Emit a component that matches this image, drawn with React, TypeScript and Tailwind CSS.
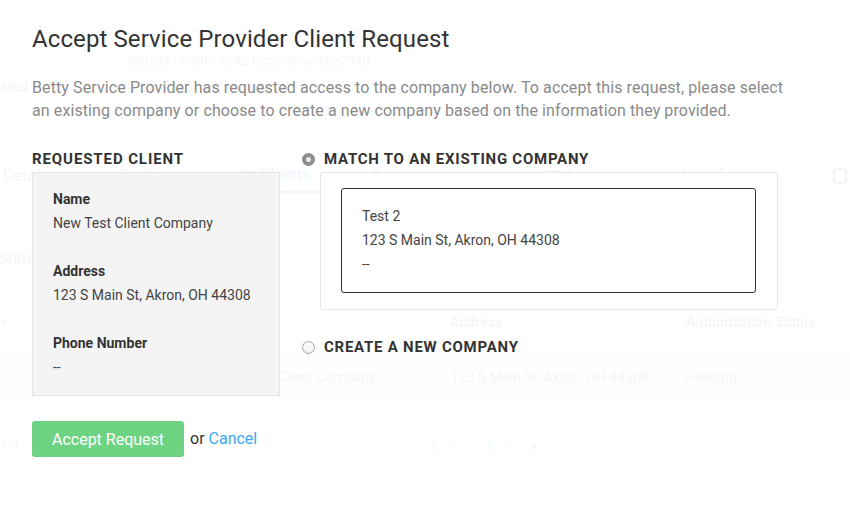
import React from "react";

function BackgroundPage() {
  return (
    <div className="h-full text-[14px] text-[#7a7a7a]">
      <div className="h-[52px]" />
      <div className="pl-[127px] h-[18px] leading-[18px] text-[13px]">88924a11-30f6-4542-bccd-d9cac6ba7940</div>
      <div className="flex h-[20px] mt-[7px] leading-[20px]">
        <div className="w-[28px] flex justify-end overflow-hidden">
          <span className="shrink-0 whitespace-nowrap font-bold">Date Created</span>
        </div>
        <span className="ml-[99px]">4/25/2019</span>
      </div>

      {/* tabs */}
      <div className="mt-[61px] flex h-[36px] items-center text-[16px]">
        <span className="w-[120px] pl-[3px]">Details</span>
        <span className="w-[120px]">Staff</span>
        <span className="w-[88px] h-full flex items-center gap-[6px] border-b-[3px] border-[#3fa9f5] text-[#3fa9f5] font-bold">
          <span className="w-[14px] h-[10px] rounded-sm bg-[#3fa9f5]" />
          Clients
        </span>
        <span className="w-[42px]" />
        <span className="w-[175px] flex items-center gap-[6px]">
          <span className="w-[12px] h-[12px] rotate-45 border-2 border-[#7a7a7a]" />
          Waste Streams
        </span>
        <span className="w-[288px] flex items-center gap-[6px]">
          <span className="w-[16px] h-[12px] border-2 border-[#7a7a7a]" />
          Non-Hazardous Manifests
        </span>
        <span className="w-[14px] h-[16px] rounded-[3px] border-2 border-[#7a7a7a]" />
      </div>

      <div className="mt-[55px] h-[20px] leading-[20px] text-[16px] -ml-[2px]">Status</div>

      {/* table header */}
      <div className="mt-[43px] flex h-[20px] items-center font-bold">
        <span className="w-[450px] text-[10px]">⇕</span>
        <span className="w-[236px]">Address</span>
        <span>Authorization Status</span>
      </div>

      {/* row */}
      <div className="mt-[22px] flex h-[46px] items-center bg-[#dde9f5]">
        <span className="w-[451px] pl-[216px]">New Test Client Company</span>
        <span className="w-[235px]">123 S Main St, Akron, OH 44308</span>
        <span>Pending</span>
      </div>

      {/* pagination */}
      <div className="mt-[36px] flex h-[20px] items-center">
        <span className="w-[430px] text-[13px]">1/1</span>
        <span className="w-[20px]">«</span>
        <span className="w-[35px]">‹</span>
        <span className="w-[20px] text-[#3fa9f5] font-bold">1</span>
        <span className="w-[25px]">›</span>
        <span>»</span>
      </div>
    </div>
  );
}

function Radio({ checked }: { checked?: boolean }) {
  if (checked) {
    return (
      <span className="w-[13px] h-[13px] rounded-full bg-[#8d8d8d] flex items-center justify-center shrink-0">
        <span className="w-[5px] h-[5px] rounded-full bg-[#ececec]" />
      </span>
    );
  }
  return <span className="w-[13px] h-[13px] rounded-full border border-[#a6a6a6] bg-gradient-to-b from-white to-[#ededed] shrink-0" />;
}

export default function App() {
  return (
    <div className="relative w-[850px] h-[510px] overflow-hidden bg-white font-['Roboto',sans-serif]">
      <BackgroundPage />

      <div className="absolute inset-0 bg-white/[0.93]">
        <div className="pl-[32px] pt-[23px]">
          <h1 className="text-[24px] leading-[32px] font-normal tracking-[0.1px] text-[#333]">Accept Service Provider Client Request</h1>
          <p className="mt-[21px] text-[16px] leading-[23px] tracking-[0.1px] text-[#8a8a8a]">
            Betty Service Provider has requested access to the company below. To accept this request, please select
            <br />
            an existing company or choose to create a new company based on the information they provided.
          </p>

          <div className="mt-[27px] flex gap-[22px]">
            <div className="w-[248px]">
              <h2 className="h-[20px] leading-[20px] text-[15px] font-bold tracking-[0.9px] text-[#333]">REQUESTED CLIENT</h2>
              <div className="mt-[3px] bg-[#f4f4f4] border border-[#e4e4e4] pl-[20px] pt-[14px] pb-[16px] text-[14px] leading-[24px] text-[#444]">
                <div className="font-bold text-[#333]">Name</div>
                <div>New Test Client Company</div>
                <div className="mt-[24px] font-bold text-[#333]">Address</div>
                <div>123 S Main St, Akron, OH 44308</div>
                <div className="mt-[24px] font-bold text-[#333]">Phone Number</div>
                <div>--</div>
              </div>
            </div>

            <div>
              <label className="flex h-[20px] items-center gap-[9px]">
                <Radio checked />
                <span className="text-[15px] font-bold tracking-[0.75px] text-[#333]">MATCH TO AN EXISTING COMPANY</span>
              </label>
              <div className="mt-[3px] ml-[18px] w-[458px] rounded-[3px] border border-[#e8e8e8] bg-white pl-[20px] pr-[21px] pt-[15px] pb-[16px]">
                <div className="rounded-[3px] border border-[#333] pl-[20px] pt-[15px] pb-[16px] text-[14px] leading-[24px] text-[#444]">
                  <div>Test 2</div>
                  <div>123 S Main St, Akron, OH 44308</div>
                  <div>--</div>
                </div>
              </div>
              <label className="mt-[27px] flex h-[20px] items-center gap-[9px]">
                <Radio />
                <span className="text-[15px] font-bold tracking-[0.75px] text-[#333]">CREATE A NEW COMPANY</span>
              </label>
            </div>
          </div>

          <div className="mt-[25px] flex items-center">
            <button className="w-[152px] h-[36px] rounded-[3px] bg-[#6dd383] pt-[2px] text-[16px] text-white">Accept Request</button>
            <span className="ml-[6px] text-[16px] text-[#333]">
              or <a className="text-[#3ba9f2]">Cancel</a>
            </span>
          </div>
        </div>
      </div>
    </div>
  );
}
